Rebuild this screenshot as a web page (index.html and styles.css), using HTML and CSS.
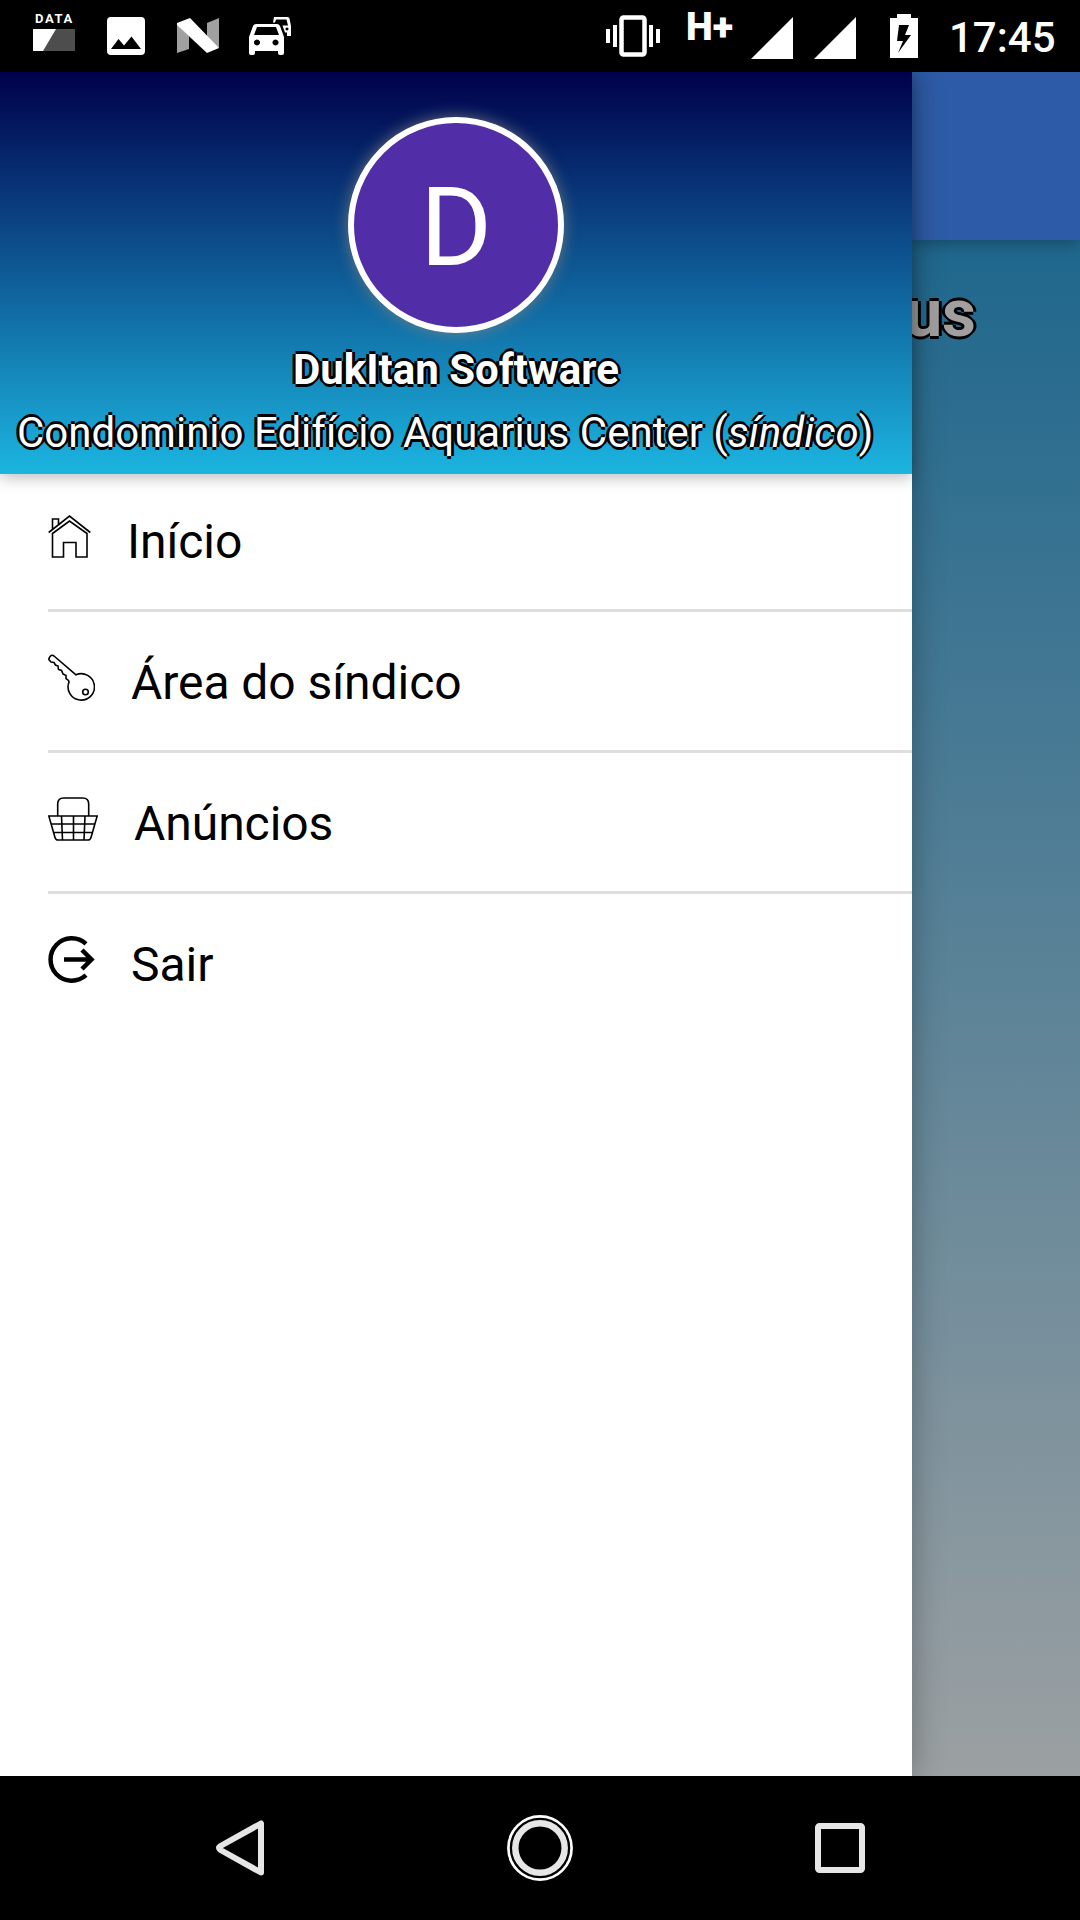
FILE: index.html
```html
<!DOCTYPE html>
<html lang="pt-BR">
<head>
<meta charset="utf-8">
<title>Condominio</title>
<link rel="stylesheet" href="styles.css">
</head>
<body>
<div class="screen">
  <header class="status">
    <div class="status-data">
      <span class="data-label">DATA</span>
      <svg width="42" height="22" viewBox="0 0 42 22"><path fill="#4d4d4d" d="M0 0h42v22H0z"/><path fill="#fff" d="M0 0h23L10 22H0z"/></svg>
    </div>
    <svg class="status-image" width="38" height="38" viewBox="0 0 38 38"><path fill="#fff" fill-rule="evenodd" d="M4 0h30q4 0 4 4v30q0 4-4 4H4q-4 0-4-4V4q0-4 4-4zM4 32h30L24.500 19.500 17 28.500 11.500 22z"/></svg>
    <svg class="status-n" width="42" height="36" viewBox="0 0 42 36"><path fill="#a0a0a0" d="M0 6l12 12v13L0 35zM30 5l12-5v30L30 22z"/><path fill="#fff" d="M0 5l13-5 29 30-12 5L0 7z"/></svg>
    <svg class="status-car" width="43" height="38" viewBox="0 0 43 38"><path fill="#fff" fill-rule="evenodd" d="M7.500 7h20.500q2 0 3 2l4 11v16q0 2-2 2h-2q-2 0-2-2v-2H6v2q0 2-2 2H2q-2 0-2-2V20L4 9q1-2 3.500-2zM8 10L5 18h25l-3-8zM8 22.500a3 3 0 1 0 .01 0zM26.500 22.500a3 3 0 1 0 .01 0z"/><path fill="#fff" fill-rule="evenodd" d="M25 0h13.500q1.500 0 2 1.500L42 9v10h-4v-3.500h-2L33.500 8.500h5.500L37.500 2.500H27L26 5.500h-2zM38 10.500a1.500 1.500 0 1 0 .01 0z"/></svg>
    <svg class="status-vibrate" width="54" height="42" viewBox="0 0 54 42"><rect x="15.500" y="2.500" width="23" height="37" rx="2" fill="none" stroke="#fff" stroke-width="4.500"/><path fill="#fff" d="M0 14h4v14H0zM7 10h4v22H7zM43 10h4v22h-4zM50 14h4v14h-4z"/></svg>
    <span class="status-net">H+</span>
    <svg class="status-sig1" width="42" height="42" viewBox="0 0 42 42"><path fill="#fff" d="M42 0v42H0z"/></svg>
    <svg class="status-sig2" width="42" height="42" viewBox="0 0 42 42"><path fill="#fff" d="M42 0v42H0z"/></svg>
    <svg class="status-battery" width="28" height="44" viewBox="0 0 28 44"><path fill="#fff" fill-rule="evenodd" d="M7 0h14v4h7v40H0V4h7zM9 11L7 27h6L8 39 21 21h-6l4-10z"/></svg>
    <span class="status-clock">17:45</span>
  </header>

  <div class="content">
    <nav class="drawer">
      <div class="profile">
        <div class="avatar">D</div>
        <div class="user">DukItan Software</div>
        <div class="building">Condominio Edifício Aquarius Center (<em>síndico</em>)</div>
      </div>
      <ul class="menu">
        <li class="item">
          <svg width="43" height="44" viewBox="0 0 43 44" fill="none" stroke="#000" stroke-width="1.600"><path d="M.7 18.500L21.500 2 42.300 18.500M4.500 15.500V5h6v6.500M4.500 19.500L21.500 7 39 19.500V43H28V28.500H15.500V43h-11z"/></svg>
          <span>Início</span>
        </li>
        <li class="item">
          <svg width="47" height="48" viewBox="0 0 47 48" fill="none" stroke="#000" stroke-width="1.600"><path d="M28 20.800L6 2Q4 .5 2.500 2T.8 5.500L3 8l3 .5L7.500 11l2.500 1 .5 3.500 3 1 1.500 3.500 3 1.500v3l2.500 2L21 28a13.200 13.200 0 1 0 7-7.200z"/><circle cx="37.500" cy="38" r="2.800"/></svg>
          <span>Área do síndico</span>
        </li>
        <li class="item">
          <svg width="50" height="44" viewBox="0 0 50 44" fill="none" stroke="#000" stroke-width="1.600"><path d="M9.700 19V7q0-6 6-6h19q6 0 6 6v12M.8 19h48.400L43 40.500Q42.300 43 40 43H10q-2.300 0-3-2.500zM3 27h44M5.500 35.500h39M13.500 19l1 24M25.500 19v24M37 19l-1 24"/></svg>
          <span>Anúncios</span>
        </li>
        <li class="item">
          <svg width="47" height="48" viewBox="0 0 47 48" fill="none" stroke="#000" stroke-width="4.500"><path d="M38 7.800A21.200 21.200 0 1 0 38 39.200M16 23.500h27M34 14l9.500 9.500L34 33"/></svg>
          <span>Sair</span>
        </li>
      </ul>
    </nav>
    <main class="page">
      <div class="toolbar"></div>
      <h1 class="title">us</h1>
    </main>
  </div>

  <footer class="navbar">
    <svg width="48" height="56" viewBox="0 0 48 56"><path fill="none" stroke="#e6e6e6" stroke-width="6" stroke-linejoin="round" d="M45 3.500v49L4.500 30q-3-2 0-4z"/></svg>
    <svg width="66" height="66" viewBox="0 0 66 66" fill="none"><circle cx="33" cy="33" r="31.600" stroke="#fff" stroke-width="2.700"/><circle cx="33" cy="33" r="24.700" stroke="#e6e6e6" stroke-width="6.500"/></svg>
    <svg width="50" height="50" viewBox="0 0 50 50"><rect x="3" y="3" width="44" height="44" rx="1.500" fill="none" stroke="#e6e6e6" stroke-width="6"/></svg>
  </footer>
</div>
</body>
</html>
```

FILE: styles.css
```css
* { box-sizing: border-box; }
body { margin: 0; font-family: Roboto, sans-serif; background: #000; }
svg { display: block; flex: none; }

.screen {
  width: 1080px;
  height: 1920px;
  display: flex;
  flex-direction: column;
  overflow: hidden;
}

/* Status bar */
.status {
  height: 72px;
  flex: none;
  display: flex;
  align-items: flex-start;
  padding-left: 33px;
  background: #000;
  color: #fff;
}
.status-data { width: 42px; padding-top: 11px; }
.data-label {
  display: block;
  height: 18px;
  padding-left: 2px;
  font: 700 13px/15px Roboto, sans-serif;
  letter-spacing: 1.6px;
}
.status-image { margin: 17px 0 0 32px; }
.status-n { margin: 18px 0 0 32px; }
.status-car { margin: 17px 0 0 30px; }
.status-vibrate { margin: 15px 0 0 314px; }
.status-net { width: 48px; margin: 6px 0 0 26px; font: 900 38px/42px Roboto, sans-serif; white-space: nowrap; }
.status-sig1 { margin: 17px 0 0 17px; }
.status-sig2 { margin: 17px 0 0 21px; }
.status-battery { margin: 14px 0 0 34px; }
.status-clock { margin: 13px 0 0 31px; font: 500 42px/49px Roboto, sans-serif; }

.content { display: flex; height: 1704px; flex: none; overflow: hidden; }

/* Side menu */
.drawer {
  position: relative;
  z-index: 1;
  width: 912px;
  flex: none;
  background: #fff;
  box-shadow: 0 0 30px rgba(0, 0, 0, .3);
}
.profile {
  height: 402px;
  padding-top: 45px;
  background: linear-gradient(#00004b, #1cb5e0);
  box-shadow: 0 3px 15px rgba(0, 0, 0, .28);
  color: #fff;
  text-shadow: -3px 0 #000, 0 3px #000, 3px 0 #000, 0 -3px #000;
}
.avatar {
  width: 216px;
  height: 216px;
  margin: 0 auto;
  border: 6px solid #fff;
  border-radius: 50%;
  background: #512da8;
  box-shadow: 0 0 15px rgba(128, 128, 128, .8);
  text-align: center;
  font-size: 110px;
  line-height: 210px;
  text-shadow: none;
}
.user { margin-top: 12px; text-align: center; font: 700 42px/50px Roboto, sans-serif; }
.building { margin-top: 13px; padding-left: 17px; font: 400 42px/50px Roboto, sans-serif; white-space: nowrap; }

.menu { list-style: none; margin: -3px 0 0 48px; padding: 0; }
.item {
  height: 141px;
  display: flex;
  align-items: center;
  gap: 36px;
  border-bottom: 3px solid #dedede;
  font-size: 48px;
  line-height: 60px;
  color: #000;
}
.item:last-child { border-bottom: 0; padding-bottom: 3px; }
.item svg { margin-top: -6px; }
.item:first-child svg { margin-top: -8px; }
.item span { padding-top: 4px; letter-spacing: -.05px; }

/* Page behind the menu */
.page { flex: 1; min-width: 0; background: linear-gradient(#1f678d 168px, #9ba0a2); }
.toolbar { height: 168px; background: #2e5ba7; box-shadow: 0 3px 15px rgba(0, 0, 0, .3); }
.title {
  margin: 34px 104px 0 0;
  text-align: right;
  font: 700 66px/80px Roboto, sans-serif;
  color: #a09e9e;
  direction: rtl;
  text-shadow: -3px 0 #000, 0 3px #000, 3px 0 #000, 0 -3px #000;
}

/* System navigation */
.navbar {
  height: 144px;
  flex: none;
  display: flex;
  align-items: center;
  justify-content: space-between;
  padding: 0 215px 0 216px;
  background: #000;
}
```
